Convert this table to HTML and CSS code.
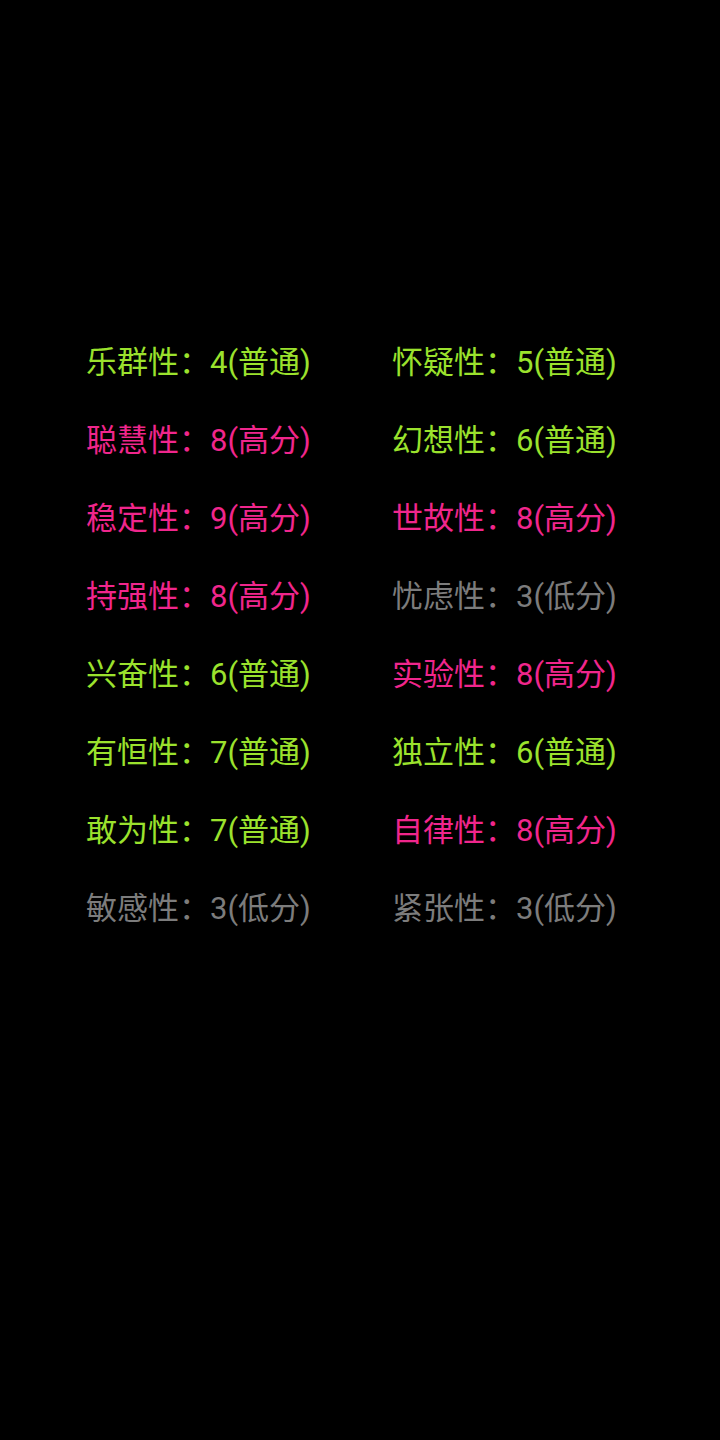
FILE: index.html
```html
<!DOCTYPE html>
<html lang="zh">
<head>
<meta charset="utf-8">
<link rel="stylesheet" href="styles.css">
</head>
<body>
<div class="grid">
  <div class="item mid">乐群性：4(普通)</div>
  <div class="item mid">怀疑性：5(普通)</div>
  <div class="item high">聪慧性：8(高分)</div>
  <div class="item mid">幻想性：6(普通)</div>
  <div class="item high">稳定性：9(高分)</div>
  <div class="item high">世故性：8(高分)</div>
  <div class="item high">持强性：8(高分)</div>
  <div class="item low">忧虑性：3(低分)</div>
  <div class="item mid">兴奋性：6(普通)</div>
  <div class="item high">实验性：8(高分)</div>
  <div class="item mid">有恒性：7(普通)</div>
  <div class="item mid">独立性：6(普通)</div>
  <div class="item mid">敢为性：7(普通)</div>
  <div class="item high">自律性：8(高分)</div>
  <div class="item low">敏感性：3(低分)</div>
  <div class="item low">紧张性：3(低分)</div>
</div>
</body>
</html>
```
FILE: styles.css
```css
html, body {
  margin: 0;
  background: #000;
  height: 100%;
}
body {
  font-family: Roboto, "Noto Sans CJK SC", sans-serif;
}
.grid {
  display: grid;
  grid-template-columns: 306px 306px;
  padding: 324px 0 0 86px;
}
.item {
  font-size: 31px;
  line-height: 78px;
  height: 78px;
  white-space: nowrap;
}
.mid { color: #9be22d; }
.high { color: #f0268c; }
.low { color: #7c7c7c; }
```
